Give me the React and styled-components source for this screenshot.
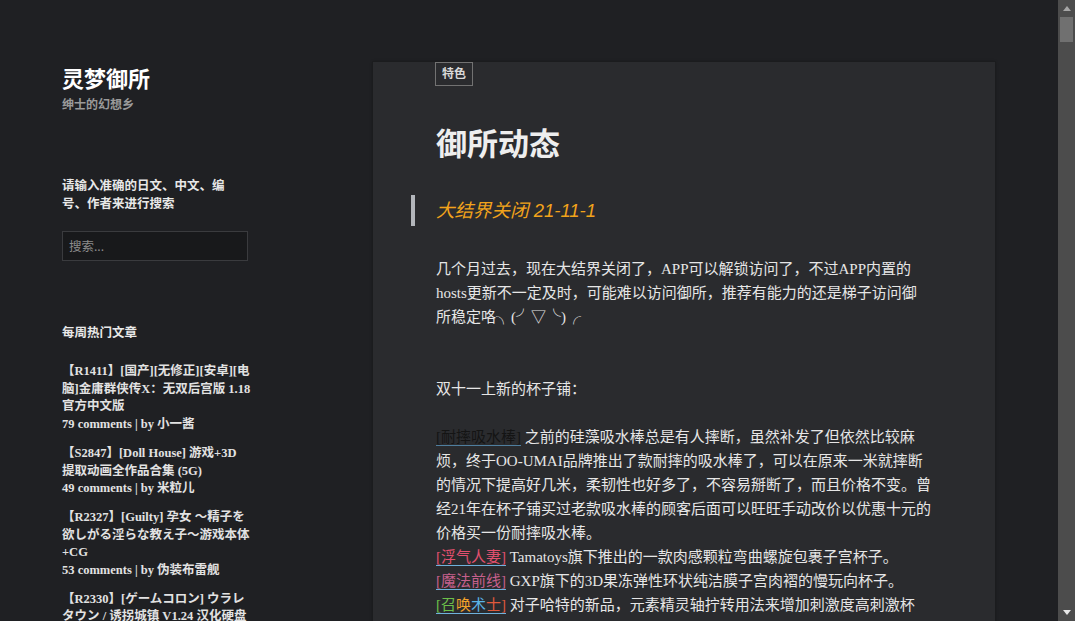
import React from "react";
import styled, { createGlobalStyle } from "styled-components";

const GlobalStyle = createGlobalStyle`
  html, body {
    margin: 0;
    padding: 0;
    height: 100%;
    overflow: hidden;
    background: #1f2023;
  }
  #root {
    height: 100%;
  }
`;

const SANS = `"Noto Sans", "Noto Sans CJK SC", sans-serif`;
const SERIF = `"Liberation Serif", "Noto Sans CJK SC", serif`;

const Shell = styled.div`
  display: flex;
  height: 100vh;
`;

const Page = styled.div`
  flex: 1;
  display: flex;
  align-items: flex-start;
  overflow: hidden;
  background: #1f2023;
`;

const Sidebar = styled.aside`
  width: 373px;
  flex-shrink: 0;
  box-sizing: border-box;
  padding: 64px 0 0 62px;
  font-family: ${SANS};
`;

const SiteTitle = styled.h1`
  margin: 0;
  font-size: 22px;
  line-height: 28px;
  font-weight: 700;
  color: #ffffff;
`;

const Tagline = styled.p`
  margin: 4px 0 0;
  font-size: 12px;
  line-height: 18px;
  font-weight: 700;
  color: #9a9a9a;
`;

const Widget = styled.section`
  width: ${(p) => p.$width || 186}px;
  margin-top: ${(p) => p.$top}px;
`;

const WidgetTitle = styled.h2`
  margin: 0;
  font-size: 12.5px;
  line-height: 18px;
  font-weight: 700;
  color: #e8e8e8;
`;

const SearchInput = styled.input`
  display: block;
  width: 186px;
  height: 30px;
  margin-top: 18px;
  box-sizing: border-box;
  padding: 0 6px;
  background: #18191b;
  border: 1px solid #3a3b3e;
  color: #dddddd;
  font-family: ${SANS};
  font-size: 12.5px;
  outline: none;
  &::placeholder {
    color: #8c8c8c;
  }
`;

const PostList = styled.ul`
  list-style: none;
  margin: 21px 0 0;
  padding: 0;
`;

const PostItem = styled.li`
  margin-bottom: 11px;
  font-family: ${SERIF};
  font-size: 12.5px;
  line-height: 17.7px;
  font-weight: 700;
  color: #e2e2e2;
`;

const Panel = styled.main`
  width: 622px;
  flex-shrink: 0;
  margin-top: 62px;
  min-height: 700px;
  background: #2a2b2e;
  box-shadow: 0 0 0 1px #1b1c1e, 0 0 3px rgba(0, 0, 0, 0.45);
`;

const Tag = styled.span`
  display: inline-block;
  height: 24px;
  margin-left: 62px;
  box-sizing: border-box;
  padding: 0 6px;
  border: 1px solid #727272;
  font-family: ${SANS};
  font-size: 12px;
  line-height: 22px;
  font-weight: 700;
  color: #d9d9d9;
`;

const Article = styled.article`
  max-width: 495.5px;
  margin-left: 63px;
`;

const Title = styled.h1`
  margin: 37px 0 0;
  font-family: ${SANS};
  font-size: 31px;
  line-height: 40px;
  font-weight: 700;
  color: #eeeeee;
`;

const Quote = styled.blockquote`
  margin: 32px 0 0 -25px;
  padding-left: 21px;
  border-left: 4px solid #b3b6bb;
  font-family: "Liberation Sans", "Noto Sans CJK SC", sans-serif;
  font-style: italic;
  font-size: 18.5px;
  line-height: 31px;
  color: #f2a31b;
`;

const P = styled.p`
  margin: ${(p) => p.$top || 24}px 0 24px;
  font-family: ${SERIF};
  font-size: 15px;
  line-height: 24px;
  color: #e6e6e6;
`;

const Shop = styled.a`
  color: ${(p) => p.$color};
  text-decoration: none;
  border-bottom: 1px solid ${(p) => p.$line};
`;

const Tint = styled.span`
  color: ${(p) => p.$color};
`;

const ScrollTrack = styled.div`
  width: 17px;
  flex-shrink: 0;
  display: flex;
  flex-direction: column;
  align-items: center;
  background: #4c4c4c;
`;

const Arrow = styled.div`
  width: 0;
  height: 0;
  margin: ${(p) => (p.$down ? "auto 0 6px" : "6px 0 0")};
  border-left: 4px solid transparent;
  border-right: 4px solid transparent;
  ${(p) =>
    p.$down
      ? "border-top: 5px solid #e8e8e8;"
      : "border-bottom: 5px solid #a6a6a6;"}
`;

const Thumb = styled.div`
  width: 13px;
  height: 25px;
  margin-top: 6px;
  background: #707070;
`;

const posts = [
  {
    title: "【R1411】[国产][无修正][安卓][电脑]金庸群侠传X：无双后宫版 1.18 官方中文版",
    meta: "79 comments | by 小一酱",
  },
  {
    title: "【S2847】[Doll House] 游戏+3D 提取动画全作品合集 (5G)",
    meta: "49 comments | by 米粒儿",
  },
  {
    title: "【R2327】[Guilty] 孕女 ～精子を欲しがる淫らな教え子～游戏本体+CG",
    meta: "53 comments | by 伪装布雷舰",
  },
  {
    title: "【R2330】[ゲームコロン] ウラレタウン / 诱拐城镇 V1.24 汉化硬盘版",
    meta: "41 comments | by 小一酱",
  },
];

export default function App() {
  return (
    <Shell>
      <GlobalStyle />
      <Page>
        <Sidebar>
          <SiteTitle>灵梦御所</SiteTitle>
          <Tagline>绅士的幻想乡</Tagline>

          <Widget $top={63}>
            <WidgetTitle>请输入准确的日文、中文、编号、作者来进行搜索</WidgetTitle>
            <SearchInput placeholder="搜索..." />
          </Widget>

          <Widget $top={63} $width={190}>
            <WidgetTitle>每周热门文章</WidgetTitle>
            <PostList>
              {posts.map((post) => (
                <PostItem key={post.title}>
                  {post.title}
                  <br />
                  {post.meta}
                </PostItem>
              ))}
            </PostList>
          </Widget>
        </Sidebar>

        <Panel>
          <Tag>特色</Tag>
          <Article>
            <Title>御所动态</Title>
            <Quote>大结界关闭 21-11-1</Quote>
            <P $top={31}>
              几个月过去，现在大结界关闭了，APP可以解锁访问了，不过APP内置的hosts更新不一定及时，可能难以访问御所，推荐有能力的还是梯子访问御所稳定咯╮(╯▽╰)╭
            </P>
            <P $top={48}>双十一上新的杯子铺：</P>
            <P>
              <Shop $color="#141414" $line="#4f7e9e">[耐摔吸水棒]</Shop>{" "}
              之前的硅藻吸水棒总是有人摔断，虽然补发了但依然比较麻烦，终于OO-UMAI品牌推出了款耐摔的吸水棒了，可以在原来一米就摔断的情况下提高好几米，柔韧性也好多了，不容易掰断了，而且价格不变。曾经21年在杯子铺买过老款吸水棒的顾客后面可以旺旺手动改价以优惠十元的价格买一份耐摔吸水棒。
              <br />
              <Shop $color="#e2506f" $line="#6fb2dc">[浮气人妻]</Shop>{" "}
              Tamatoys旗下推出的一款肉感颗粒弯曲螺旋包裹子宫杯子。
              <br />
              <Shop $color="#c6608c" $line="#6fb2dc">[魔法前线]</Shop>{" "}
              GXP旗下的3D果冻弹性环状纯洁膜子宫肉褶的慢玩向杯子。
              <br />
              <Shop $color="#e0503c" $line="#6fb2dc">
                <Tint $color="#6cc04a">[召</Tint>
                <Tint $color="#f2a22a">唤</Tint>
                <Tint $color="#5ab4e6">术</Tint>
                <Tint $color="#e05a3c">士]</Tint>
              </Shop>{" "}
              对子哈特的新品，元素精灵轴拧转用法来增加刺激度高刺激杯子。
            </P>
          </Article>
        </Panel>
      </Page>
      <ScrollTrack>
        <Arrow />
        <Thumb />
        <Arrow $down />
      </ScrollTrack>
    </Shell>
  );
}
